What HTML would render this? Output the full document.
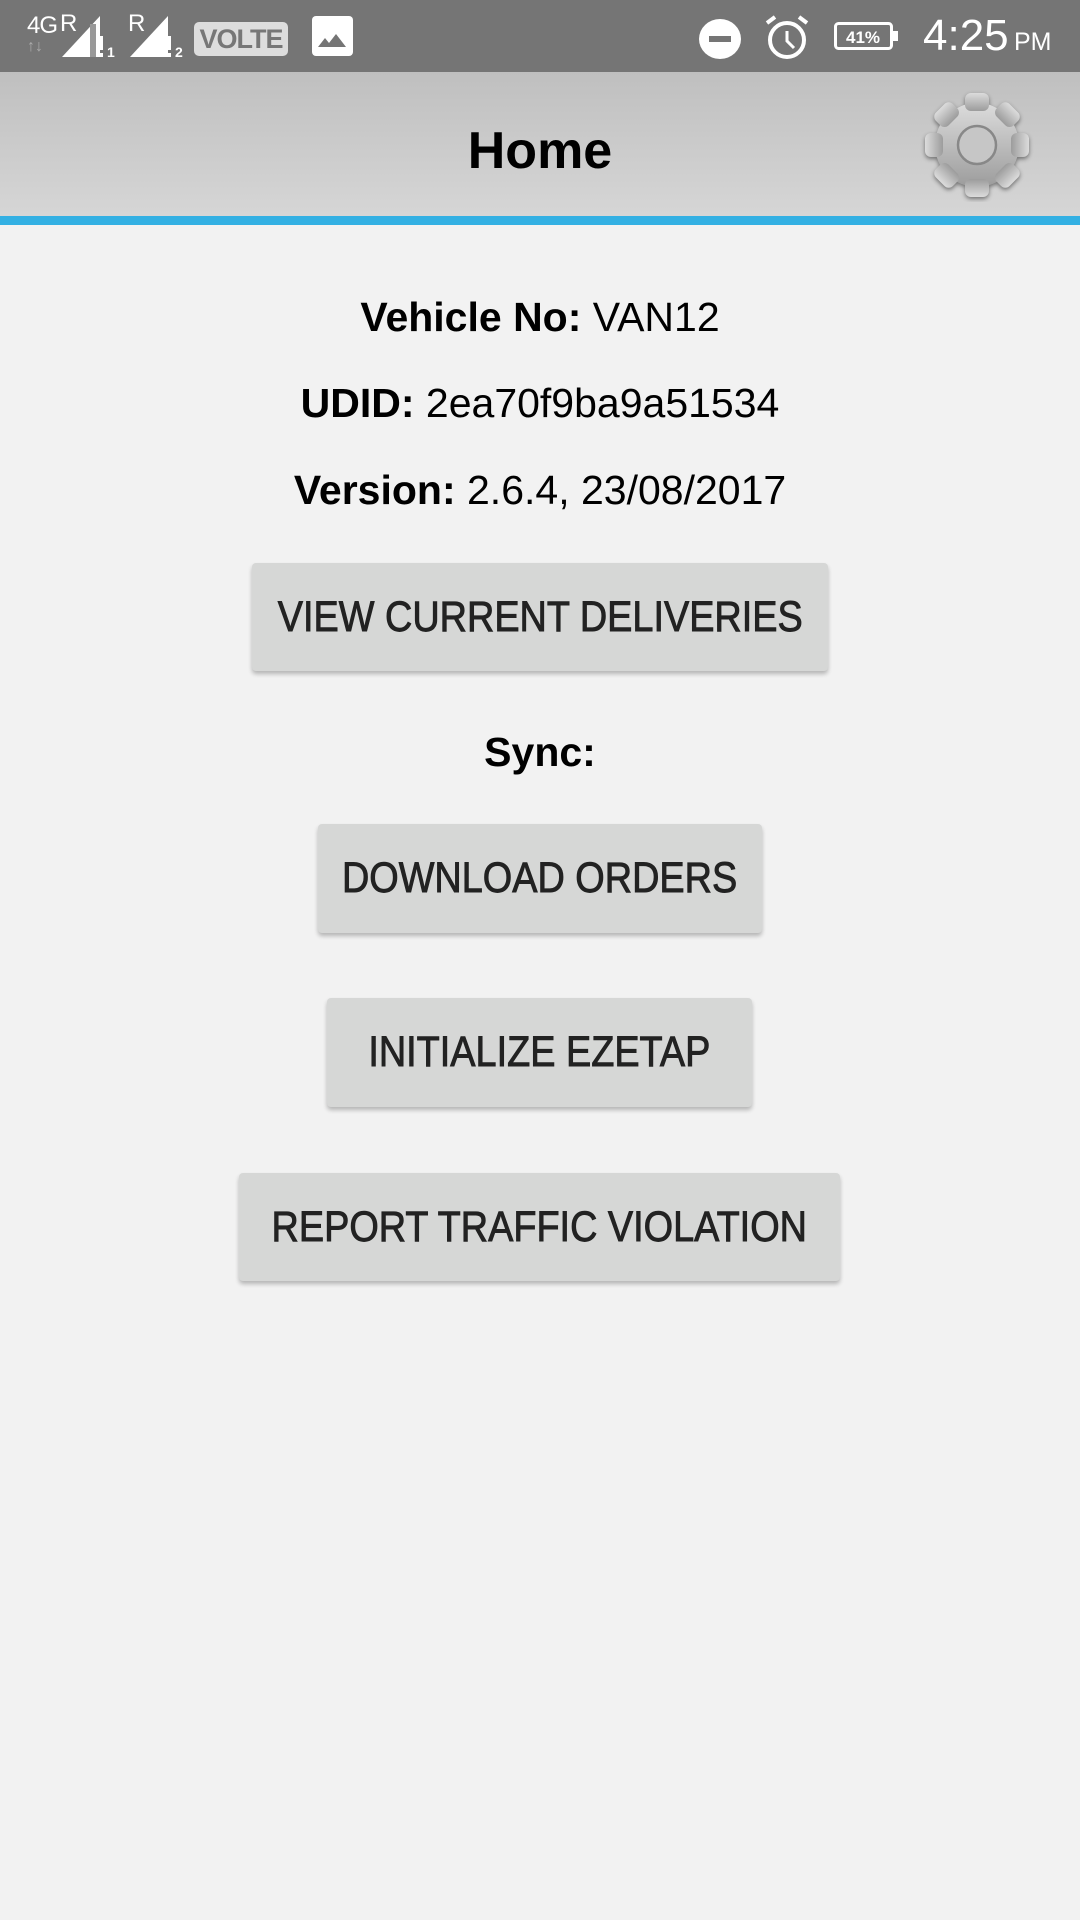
<!DOCTYPE html>
<html><head><meta charset="utf-8"><style>
*{margin:0;padding:0;box-sizing:border-box}
body{width:1080px;height:1920px;background:#f2f2f2;font-family:"Liberation Sans",sans-serif;position:relative;overflow:hidden}
.abs{position:absolute}
#sb{left:0;top:0;width:1080px;height:72px;background:#757575;color:#fff}
#hd{left:0;top:72px;width:1080px;height:144px;background:linear-gradient(#bfbfbf,#d6d6d6)}
#bl{left:0;top:216px;width:1080px;height:9px;background:#33b0e3}
.t{position:absolute;left:0;width:1080px;text-align:center;font-size:41px;color:#000;white-space:nowrap}
.t b{font-weight:bold}
.btn{position:absolute;background:#d6d7d6;border-radius:4px;box-shadow:0 3px 4px rgba(0,0,0,.25);display:flex;align-items:center;justify-content:center;font-size:43px;color:#222;white-space:nowrap;-webkit-text-stroke:0.9px #222}
.btn span{display:inline-block;transform:scaleX(0.88)}
</style></head><body>
<div id="sb" class="abs">
 <div class="abs" style="left:27px;top:12px;font-size:24px;color:#fff;letter-spacing:-1px">4G</div>
 <div class="abs" style="left:60px;top:10px;font-size:24px;color:#fff">R</div>
 <div class="abs" style="left:27px;top:38px;font-size:16px;color:#aaa;font-weight:bold">↑↓</div>
 <svg class="abs" style="left:60px;top:14px" width="64" height="46"><polygon points="2,43 40,2 40,43" fill="#fff"/><rect x="30" y="10" width="6" height="33" fill="#999"/><rect x="38" y="22" width="5" height="14" fill="#fff"/><rect x="38" y="39" width="5" height="4" fill="#fff"/><text x="47" y="43" font-size="14" fill="#fff" font-family="Liberation Sans" font-weight="bold">1</text></svg>
 <div class="abs" style="left:128px;top:10px;font-size:24px;color:#fff">R</div>
 <svg class="abs" style="left:128px;top:14px" width="64" height="46"><polygon points="2,43 40,2 40,43" fill="#fff"/><rect x="38" y="22" width="5" height="14" fill="#fff"/><rect x="38" y="39" width="5" height="4" fill="#fff"/><text x="47" y="43" font-size="14" fill="#fff" font-family="Liberation Sans" font-weight="bold">2</text></svg>
 <div class="abs" style="left:194px;top:22px;width:94px;height:34px;background:#ddd;border-radius:5px;color:#777;font-weight:bold;font-size:27px;text-align:center;line-height:34px;letter-spacing:-1px">VOLTE</div>
 <svg class="abs" style="left:312px;top:16px" width="41" height="40"><rect width="41" height="40" rx="4" fill="#fff"/><polygon points="6,31 13,22 17,27 24,18 34,31" fill="#757575"/></svg>
 <svg class="abs" style="left:698px;top:19px" width="44" height="40"><ellipse cx="22" cy="20" rx="21" ry="20" fill="#fff"/><rect x="11" y="17" width="22" height="6" fill="#757575"/></svg>
 <svg class="abs" style="left:764px;top:14px" width="46" height="46"><circle cx="23" cy="26" r="17" fill="none" stroke="#fff" stroke-width="4"/><path d="M23 17 V27 L30 34" stroke="#fff" stroke-width="3" fill="none"/><path d="M3 9 L11 3 M43 9 L35 3" stroke="#fff" stroke-width="4"/></svg>
 <svg class="abs" style="left:834px;top:22px" width="68" height="28"><rect x="1.5" y="1.5" width="56" height="25" rx="3" fill="none" stroke="#fff" stroke-width="3"/><rect x="59" y="9" width="5" height="10" fill="#fff"/><text x="29" y="21" text-anchor="middle" font-size="17" font-weight="bold" fill="#fff" font-family="Liberation Sans">41%</text></svg>
 <div class="abs" style="left:923px;top:11px;font-size:44px;color:#fff">4:25</div>
 <div class="abs" style="left:1014px;top:28px;font-size:25px;color:#fff">PM</div>
</div>
<div id="hd" class="abs">
 <div class="abs" style="left:0;top:49px;width:1080px;text-align:center;font-size:52px;font-weight:bold;color:#000">Home</div>
 <svg class="abs" style="left:920px;top:16px" width="114" height="114" viewBox="-57 -57 114 114">
  <defs><linearGradient id="g" x1="0" y1="0" x2="0" y2="1"><stop offset="0" stop-color="#dcdcdc"/><stop offset="1" stop-color="#9c9c9c"/></linearGradient></defs>
  <g fill="url(#g)" filter="drop-shadow(0 2px 2px rgba(0,0,0,.45))">
   <circle r="42"/>
   <g id="tooth"><rect x="-12" y="-52" width="24" height="18" rx="6"/></g>
   <use href="#tooth" transform="rotate(45)"/><use href="#tooth" transform="rotate(90)"/><use href="#tooth" transform="rotate(135)"/><use href="#tooth" transform="rotate(180)"/><use href="#tooth" transform="rotate(225)"/><use href="#tooth" transform="rotate(270)"/><use href="#tooth" transform="rotate(315)"/>
  </g>
  <circle r="19" fill="#c6c6c6" stroke="#888" stroke-width="2.5"/>
 </svg>
</div>
<div id="bl" class="abs"></div>
<div class="t" style="top:294px"><b>Vehicle No:</b> VAN12</div>
<div class="t" style="top:380px"><b>UDID:</b> 2ea70f9ba9a51534</div>
<div class="t" style="top:467px"><b>Version:</b> 2.6.4, 23/08/2017</div>
<div class="btn" style="left:252px;top:563px;width:576px;height:108px"><span>VIEW CURRENT DELIVERIES</span></div>
<div class="t" style="top:729px"><b>Sync:</b></div>
<div class="btn" style="left:318px;top:824px;width:444px;height:109px"><span>DOWNLOAD ORDERS</span></div>
<div class="btn" style="left:327px;top:998px;width:425px;height:109px"><span>INITIALIZE EZETAP</span></div>
<div class="btn" style="left:239px;top:1173px;width:601px;height:108px"><span>REPORT TRAFFIC VIOLATION</span></div>
</body></html>
